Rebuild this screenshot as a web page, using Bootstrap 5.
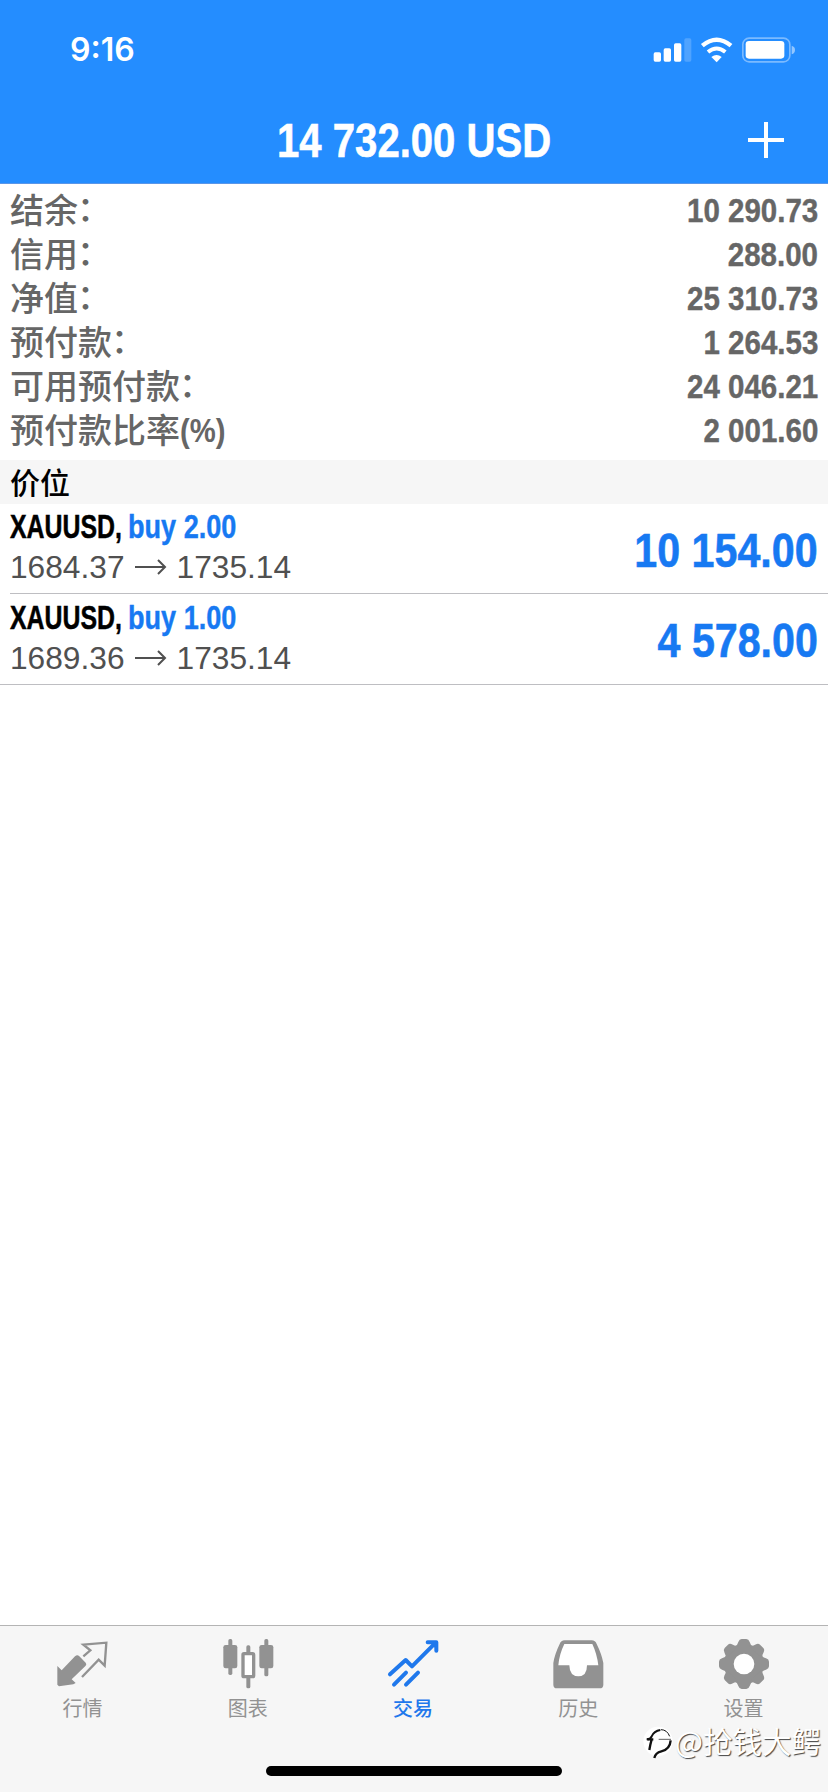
<!DOCTYPE html>
<html lang="zh-CN">
<head>
<meta charset="utf-8">
<meta name="viewport" content="width=device-width, initial-scale=1">
<title>交易</title>
<link href="https://cdn.jsdelivr.net/npm/bootstrap@5.3.0/dist/css/bootstrap.min.css" rel="stylesheet">
<style>
  body { width: 828px; height: 1792px; overflow: hidden; background: #fff; font-family: "Liberation Sans", "Noto Sans CJK SC", sans-serif; }
  svg { display: block; flex: none; }
  .top-area { height: 184px; background: #248dff; border-bottom: 1px solid #5a96e8; }
  .status-row { height: 100px; padding: 0 31px 0 70px; }
  .clock { font: 600 32px/1 Inter, sans-serif; }
  .title-row { height: 83px; display: grid; grid-template-columns: 1fr auto 1fr; padding: 0 44px 4px; }
  .cond { display: inline-block; font-weight: 700; white-space: pre; transform-origin: 0 50%; }
  .cond-r { transform-origin: 100% 50%; }
  .title-text { font-size: 48px; line-height: 60px; padding-top: 3px; transform: scaleX(.835); transform-origin: 50% 50%; -webkit-text-stroke: .6px #fff; }
  .summary { padding: 4px 10px 8px; color: #666; }
  .summary-row { height: 44px; }
  .summary-label { font: 500 34px/42px "Noto Sans CJK SC", sans-serif; }
  .colon { display: inline-block; transform: translate(-1px, -2px); }
  .pct { font: 700 34px/44px "Liberation Sans", sans-serif; transform: scaleX(.86); }
  .summary-value { font-size: 34px; line-height: 44px; transform: scaleX(.868); -webkit-text-stroke: .4px #666; }
  .section-head { height: 44px; padding: 0 10px; background: #f6f6f6; color: #000; font: 500 30px/42px "Noto Sans CJK SC", sans-serif; }
  .deal { height: 90px; margin-left: 10px; padding-right: 10px; border-bottom: 1px solid #bebec2; }
  .deal-last { height: 91px; margin-left: 0; padding-left: 10px; }
  .deal-info { padding-bottom: 5px; }
  .deal-name { height: 42px; font-size: 32.5px; line-height: 42px; }
  .deal-symbol { width: 118px; color: #000; transform: scaleX(.765); -webkit-text-stroke: .5px #000; }
  .deal-side { color: #1779f2; transform: scaleX(.833); -webkit-text-stroke: .4px #1779f2; }
  .deal-price { height: 38px; font-size: 31.700px; line-height: 38px; color: #505050; }
  .deal-profit { color: #1779f2; font-size: 48px; line-height: 60px; padding-top: 4px; transform: scaleX(.858); -webkit-text-stroke: .6px #1779f2; }
  .tabs { height: 167px; background: #f6f6f6; border-top: 1px solid #b4b4b4; padding-right: 2px; color: #929292; }
  .tab-item { flex: 1 1 0; padding-top: 8px; font: 400 20px/24px "Noto Sans CJK SC", sans-serif; }
  .tab-item span { margin-top: 6px; }
  .tab-item.current { color: #1f78ec; font-weight: 500; }
  .home-bar { left: 266px; bottom: 16px; width: 296px; height: 10px; border-radius: 5px; background: #000; }
  .watermark { right: 7px; bottom: 30px; height: 44px; color: #fff; font: 400 29.500px/44px "Noto Sans CJK SC", sans-serif; text-shadow: 1px 1px 1px #444; }
  .watermark svg { margin-top: 7px; }
</style>
</head>
<body class="d-flex flex-column position-relative">
<header class="top-area text-white">
  <div class="status-row d-flex align-items-center justify-content-between">
    <div class="clock">9:16</div>
    <svg width="146" height="28" viewBox="708 107 438 84" fill="#fff">
      <rect x="716" y="156" width="22" height="28" rx="5"/><rect x="746" y="144" width="22" height="40" rx="5"/><rect x="777" y="129" width="22" height="55" rx="5"/><rect x="808" y="114" width="21" height="70" rx="5" opacity=".2"/>
      <path d="M862 136q43-36 86 0" fill="none" stroke="#fff" stroke-width="13"/>
      <path d="M879 155q26-21 52 0" fill="none" stroke="#fff" stroke-width="12"/>
      <path d="M889 170q16-12 31 0l-15 16z"/>
      <rect x="983.500" y="113.500" width="141" height="71" rx="19" fill="none" stroke="#fff" stroke-width="5" opacity=".4"/>
      <rect x="992" y="122" width="116" height="53" rx="10"/><path d="M1130 136q10 3 10 13t-10 13z" opacity=".5"/>
    </svg>
  </div>
  <div class="title-row align-items-center">
    <span></span>
    <div class="cond title-text">14 732.00 USD</div>
    <svg class="ms-auto" width="36" height="36" viewBox="0 0 36 36"><path d="M18 0v36M0 18h36" stroke="#fff" stroke-width="4"/></svg>
  </div>
</header>
<main class="flex-grow-1">
  <section class="summary">
    <div class="summary-row d-flex justify-content-between"><div class="summary-label">结余<span class="colon">：</span></div><div class="cond cond-r summary-value">10 290.73</div></div>
    <div class="summary-row d-flex justify-content-between"><div class="summary-label">信用<span class="colon">：</span></div><div class="cond cond-r summary-value">288.00</div></div>
    <div class="summary-row d-flex justify-content-between"><div class="summary-label">净值<span class="colon">：</span></div><div class="cond cond-r summary-value">25 310.73</div></div>
    <div class="summary-row d-flex justify-content-between"><div class="summary-label">预付款<span class="colon">：</span></div><div class="cond cond-r summary-value">1 264.53</div></div>
    <div class="summary-row d-flex justify-content-between"><div class="summary-label">可用预付款<span class="colon">：</span></div><div class="cond cond-r summary-value">24 046.21</div></div>
    <div class="summary-row d-flex justify-content-between"><div class="summary-label d-flex">预付款比率<span class="cond pct">(%)</span></div><div class="cond cond-r summary-value">2 001.60</div></div>
  </section>
  <h2 class="section-head m-0">价位</h2>
  <article class="deal d-flex align-items-center justify-content-between">
    <div class="deal-info">
      <div class="deal-name d-flex"><span class="cond deal-symbol">XAUUSD,</span><span class="cond deal-side">buy 2.00</span></div>
      <div class="deal-price d-flex align-items-center"><span>1684.37</span><svg class="mx-2" width="36" height="24" viewBox="0 0 36 24"><path d="M2 12h30M25 5l7 7-7 7" fill="none" stroke="#505050" stroke-width="2"/></svg><span>1735.14</span></div>
    </div>
    <div class="cond cond-r deal-profit">10 154.00</div>
  </article>
  <article class="deal deal-last d-flex align-items-center justify-content-between">
    <div class="deal-info">
      <div class="deal-name d-flex"><span class="cond deal-symbol">XAUUSD,</span><span class="cond deal-side">buy 1.00</span></div>
      <div class="deal-price d-flex align-items-center"><span>1689.36</span><svg class="mx-2" width="36" height="24" viewBox="0 0 36 24"><path d="M2 12h30M25 5l7 7-7 7" fill="none" stroke="#505050" stroke-width="2"/></svg><span>1735.14</span></div>
    </div>
    <div class="cond cond-r deal-profit">4 578.00</div>
  </article>
</main>
<nav class="tabs d-flex">
  <div class="tab-item d-flex flex-column align-items-center">
    <svg width="56" height="56" viewBox="164 71 168 168"><path fill="#929292" d="M171 167l13 13 40-42q7-6 13 0l19 19q4 4 0 9l-42 41 12 11-7 4-43 6-5-5z"/><path fill="none" stroke="#929292" stroke-width="7" d="M249 138l21-18-21-17 69-6-5 69-18-18-50 52"/></svg>
    <span>行情</span>
  </div>
  <div class="tab-item d-flex flex-column align-items-center">
    <svg width="56" height="56" viewBox="659 71 168 168" fill="#929292"><rect x="669" y="104" width="42" height="70" rx="7"/><rect x="684" y="86" width="12" height="108" rx="5"/><rect x="777" y="104" width="42" height="70" rx="7"/><rect x="792" y="86" width="12" height="112" rx="5"/><rect x="738" y="105" width="12" height="28" rx="5"/><rect x="738" y="196" width="12" height="38" rx="5"/><rect x="728" y="130" width="32" height="69" rx="3" fill="#fff" stroke="#929292" stroke-width="10"/></svg>
    <span>图表</span>
  </div>
  <div class="tab-item current d-flex flex-column align-items-center">
    <svg width="56" height="56" viewBox="254 71 168 168" fill="none" stroke="#1f78ec" stroke-width="12" stroke-linecap="round" stroke-linejoin="round"><path d="M269 192l47-43 19 19 68-68M281 223l36-36M317 223l36-36"/><path d="M382 96h26v25" /><path d="M390 96h18v18z" fill="#1f78ec" stroke-width="4"/></svg>
    <span>交易</span>
  </div>
  <div class="tab-item d-flex flex-column align-items-center">
    <svg width="56" height="56" viewBox="749 71 168 168"><path fill="#929292" d="M793 90h81q11 0 15 11 15 30 20 57v65q0 11-11 11H770q-11 0-11-11v-65q4-26 19-57 4-11 15-11z"/><path fill="#fff" d="M792 101h84q14 30 18 64h-34q0 33-26 33t-27-33h-33q3-34 18-64z"/></svg>
    <span>历史</span>
  </div>
  <div class="tab-item d-flex flex-column align-items-center">
    <svg width="56" height="56" viewBox="345 71 168 168"><g transform="translate(432 161)" fill="#929292"><circle r="59"/><g id="teeth"><path id="tooth" d="M-29-50Q-19-56-17-66-14-75-7-75H7Q14-75 17-66 19-56 29-50z"/><use href="#tooth" transform="rotate(45)"/><use href="#tooth" transform="rotate(90)"/><use href="#tooth" transform="rotate(135)"/></g><use href="#teeth" transform="rotate(180)"/><circle r="31" fill="#fff"/></g></svg>
    <span>设置</span>
  </div>
</nav>
<div class="home-bar position-absolute"></div>
<div class="watermark position-absolute d-flex align-items-center">
  <svg width="32" height="40" viewBox="18 30 96 120"><circle cx="63" cy="82" r="44" fill="#fff"/><g fill="none" stroke="#111"><path d="M29 76q12 0 15-9 7-16 26-19" stroke-width="6"/><path d="M31 76h18M44 76q-4 14-7 32" stroke-width="7"/><path d="M72 47q18 0 26 20" stroke-width="3"/><path d="M65 76h37" stroke-width="2"/><path d="M101 79q-2 27-28 33-18 4-21 20" stroke-width="7"/></g></svg>
  <span>@抢钱大鳄</span>
</div>
<script src="https://cdn.jsdelivr.net/npm/bootstrap@5.3.0/dist/js/bootstrap.bundle.min.js"></script>
</body>
</html>
